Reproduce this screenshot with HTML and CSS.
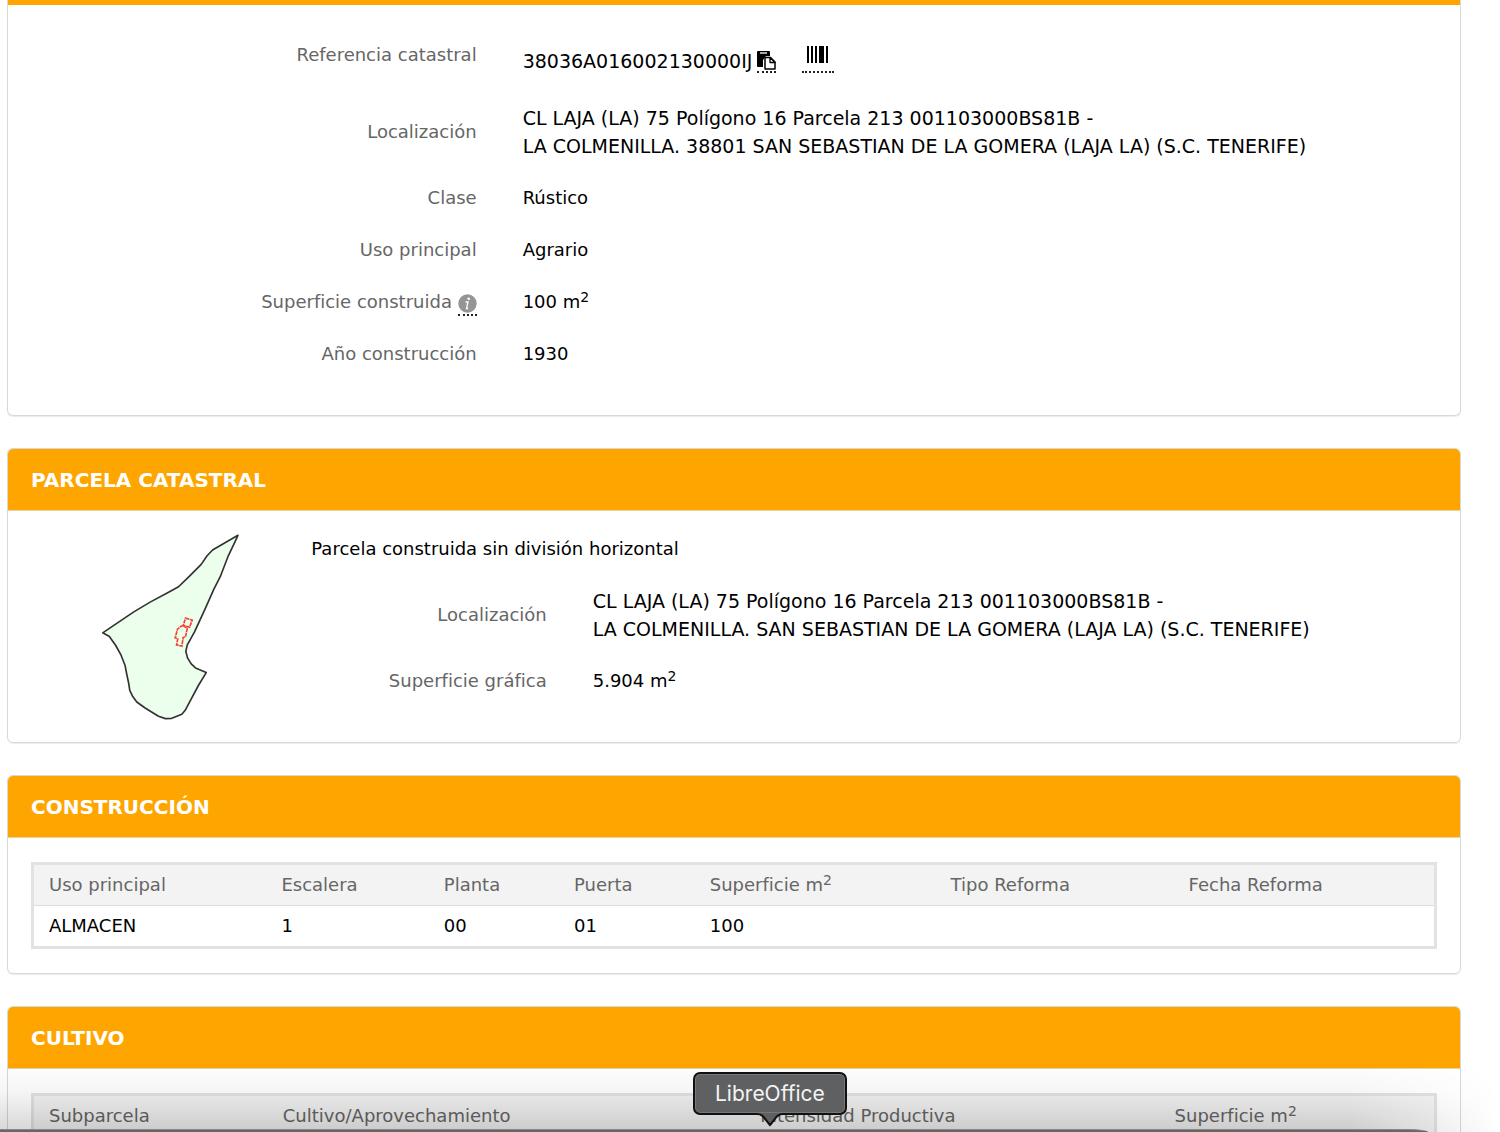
FILE: index.html
```html
<!DOCTYPE html>
<html lang="es">
<head>
  <meta charset="UTF-8">
  <meta name="viewport" content="width=device-width, initial-scale=1.0">
  <title>Consulta de datos catastrales</title>
  <link rel="stylesheet" href="styles.css">
</head>
<body>
  <main class="page">
    <section class="panel panel-first">
      <div class="panel-strip"></div>
      <dl class="data">
        <div class="row">
          <dt>Referencia catastral</dt>
          <dd class="reference">
            <span>38036A016002130000IJ</span>
            <button type="button" class="icon-btn copy" aria-label="Copiar referencia">
              <svg width="19" height="19" viewBox="0 0 19 19">
                <path d="M1 0h11q1 0 1 1v4H9L6 9v7H1q-1 0-1-1V1q0-1 1-1z" fill="#000"/>
                <path d="M3 1h7v2H3z" fill="#aaa"/>
                <path d="M8 6.500h5.500l4.500 4.500v7H8z" fill="#fff" stroke="#000" stroke-width="1.500" stroke-linejoin="round"/>
                <path d="M13 6.500v5h5z" fill="#fff" stroke="#000" stroke-width="1.300" stroke-linejoin="round"/>
              </svg>
            </button>
            <button type="button" class="icon-btn barcode" aria-label="Código de barras">
              <svg width="22" height="17" viewBox="0 0 22 17">
                <path d="M0 0h2v17H0zM4 0h2v17H4zM8 0h2v17H8zM12 0h5v17h-5zM19 0h2v17h-2z"/>
              </svg>
            </button>
          </dd>
        </div>
        <div class="row">
          <dt>Localización</dt>
          <dd class="address">CL LAJA (LA) 75 Polígono 16 Parcela 213 001103000BS81B -<br>LA COLMENILLA. 38801 SAN SEBASTIAN DE LA GOMERA (LAJA LA) (S.C. TENERIFE)</dd>
        </div>
        <div class="row">
          <dt>Clase</dt>
          <dd>Rústico</dd>
        </div>
        <div class="row">
          <dt>Uso principal</dt>
          <dd>Agrario</dd>
        </div>
        <div class="row">
          <dt>Superficie construida
            <button type="button" class="icon-btn info" aria-label="Información">
              <svg width="19" height="19" viewBox="0 0 19 19">
                <circle cx="9.500" cy="9.500" r="9.200" fill="#959595"/>
                <circle cx="10.700" cy="4.800" r="1.300" fill="#fff"/>
                <path d="M7.500 8h2.500l-1.500 6.500h1.700" fill="none" stroke="#fff" stroke-width="1.300"/>
              </svg>
            </button>
          </dt>
          <dd>100 m<sup>2</sup></dd>
        </div>
        <div class="row">
          <dt>Año construcción</dt>
          <dd>1930</dd>
        </div>
      </dl>
    </section>

    <section class="panel">
      <h2>PARCELA CATASTRAL</h2>
      <div class="parcel">
        <div class="map">
          <svg viewBox="-39 45 564 564" role="img" aria-label="Croquis de la parcela">
            <path d="M443 46L367 90L350 108L333 133L298 168L265 200L238 215L180 246L130 276L38 338L58 349L77 376L93 405L105 436L110 462L116 490L119 510L128 529L140 545L165 563L205 588L226 595L245 594L275 582L285 570L300 542L325 495L348 457L316 443L303 431L292 413L287 394L291 375L313 335L343 270L371 207L390 170L413 110L433 68Z" fill="#ecffec" stroke="#333" stroke-width="5" stroke-linejoin="round"/>
            <path d="M286 294L306 300L298 321L279 316ZM279 316L291 325L286 350L279 352L275 378L259 374L263 356L255 353L262 327L270 320Z" fill="none" stroke="#f44336" stroke-width="5" stroke-dasharray="12 2"/>
          </svg>
        </div>
        <div class="parcel-info">
          <p>Parcela construida sin división horizontal</p>
          <dl class="data">
            <div class="row">
              <dt>Localización</dt>
              <dd class="address">CL LAJA (LA) 75 Polígono 16 Parcela 213 001103000BS81B -<br>LA COLMENILLA. SAN SEBASTIAN DE LA GOMERA (LAJA LA) (S.C. TENERIFE)</dd>
            </div>
            <div class="row">
              <dt>Superficie gráfica</dt>
              <dd>5.904 m<sup>2</sup></dd>
            </div>
          </dl>
        </div>
      </div>
    </section>

    <section class="panel">
      <h2>CONSTRUCCIÓN</h2>
      <div class="panel-body">
        <table class="building">
          <thead>
            <tr>
              <th>Uso principal</th>
              <th>Escalera</th>
              <th>Planta</th>
              <th>Puerta</th>
              <th>Superficie m<sup>2</sup></th>
              <th>Tipo Reforma</th>
              <th>Fecha Reforma</th>
            </tr>
          </thead>
          <tbody>
            <tr>
              <td>ALMACEN</td>
              <td>1</td>
              <td>00</td>
              <td>01</td>
              <td>100</td>
              <td></td>
              <td></td>
            </tr>
          </tbody>
        </table>
      </div>
    </section>

    <section class="panel">
      <h2>CULTIVO</h2>
      <div class="panel-body">
        <table class="crops">
          <thead>
            <tr>
              <th>Subparcela</th>
              <th>Cultivo/Aprovechamiento</th>
              <th>Intensidad Productiva</th>
              <th>Superficie m<sup>2</sup></th>
            </tr>
          </thead>
        </table>
      </div>
    </section>
  </main>

  <div class="dock-shadow"></div>
  <div class="dock"></div>
  <div class="dock-tip" role="tooltip">
    LibreOffice
    <svg width="26" height="14" viewBox="0 0 26 14">
      <path d="M0 0H26V1C20 1 19 5 13 12C7 5 6 1 0 1Z" fill="#5f6062"/>
      <path d="M0 1C6 1 7 5 13 12C19 5 20 1 26 1" fill="none" stroke="#111" stroke-width="2"/>
    </svg>
  </div>
</body>
</html>
```
FILE: styles.css
```css
* {
  box-sizing: border-box;
}
body {
  margin: 0;
  height: 100vh;
  background: #fff;
  color: #000;
  font-family: Verdana, "DejaVu Sans", sans-serif;
  font-size: 18px;
  line-height: 28px;
  overflow: hidden;
}
.page {
  height: 100%;
  padding: 0 39px 0 7px;
  overflow: hidden;
}
.panel {
  margin-bottom: 32px;
  border: 1px solid #d8d8d8;
  border-radius: 6px;
  box-shadow: 0 1px 1px rgba(0, 0, 0, 0.08);
  overflow: hidden;
}
.panel-first {
  border-top: 0;
  border-top-left-radius: 0;
  border-top-right-radius: 0;
}
.panel-strip {
  height: 5px;
  background: #ffa500;
}
.panel h2 {
  margin: 0;
  padding: 17px 23px 16px;
  background: #ffa500;
  border-bottom: 1px solid #e6d3a8;
  color: #fff;
  font-size: 20px;
  font-weight: bold;
  line-height: 28px;
}
.panel-body {
  padding: 24px 23px;
}

/* label / value rows */
.data {
  display: flex;
  flex-direction: column;
  gap: 24px;
  margin: 0;
}
.panel-first .data {
  padding: 36px 23px 47px;
}
.row {
  display: flex;
  align-items: center;
}
.row dt {
  width: 33.3333%;
  padding: 0 23px;
  color: #666;
  text-align: right;
}
.row dd {
  flex: 1;
  margin: 0;
  padding: 0 0 0 23px;
}
.row .address,
.row .reference {
  font-size: 19px;
}
.row:has(.reference) {
  align-items: flex-start;
}
.row .reference {
  display: flex;
  align-items: flex-end;
  height: 39px;
  padding-bottom: 5px;
}
sup {
  font-size: 14px;
  line-height: 0;
  vertical-align: 6px;
}

/* icons */
.icon-btn {
  padding: 0;
  background: none;
  border: 0;
  border-bottom: 2px dotted #222;
  cursor: pointer;
}
.icon-btn svg {
  display: block;
}
.copy {
  margin: 0 26px 2px 5px;
  padding-bottom: 1px;
}
.barcode {
  margin-bottom: 2px;
  padding: 0 5px 8px;
}
.info {
  margin: -4px 0;
  padding-bottom: 1px;
  vertical-align: -5px;
}

/* parcel */
.parcel {
  display: flex;
  padding: 24px 23px 47px;
}
.map {
  width: 16.6667%;
  height: 160px;
  padding-left: 46px;
}
.map svg {
  display: block;
  width: 100%;
  overflow: visible;
}
.parcel-info {
  flex: 1;
  padding: 0 23px;
}
.parcel-info p {
  margin: 0 0 24px;
  padding-left: 23px;
}
.parcel-info .row dt {
  width: 25%;
}

/* tables */
table {
  width: 100%;
  border: 3px solid #e2e2e2;
  border-spacing: 0;
  table-layout: fixed;
}
th,
td {
  height: 40px;
  padding: 0 15px;
  text-align: left;
  white-space: nowrap;
}
th {
  height: 41px;
  background: #f3f3f3;
  border-bottom: 1px solid #ddd;
  color: #666;
  font-weight: normal;
}
.building th:nth-child(1) { width: 16.6%; }
.building th:nth-child(2) { width: 11.6%; }
.building th:nth-child(3) { width: 9.3%; }
.building th:nth-child(4) { width: 9.7%; }
.building th:nth-child(5) { width: 17.2%; }
.building th:nth-child(6) { width: 17%; }
.crops th:nth-child(1) { width: 16.7%; }
.crops th:nth-child(2) { width: 34.1%; }
.crops th:nth-child(3) { width: 29.6%; }

/* dock */
.dock-shadow {
  position: fixed;
  left: 0;
  right: 0;
  bottom: 0;
  height: 72px;
  background: linear-gradient(rgba(0, 0, 0, 0), rgba(0, 0, 0, 0.04) 45%, rgba(0, 0, 0, 0.16));
  -webkit-mask-image: linear-gradient(to right, #000 90%, transparent);
  mask-image: linear-gradient(to right, #000 90%, transparent);
}
.dock {
  position: fixed;
  left: 0;
  right: 72px;
  bottom: 0;
  height: 3px;
  background: #666;
  border-top: 1px solid #888;
  border-top-right-radius: 20px 3px;
}
.dock-tip {
  position: fixed;
  left: 693px;
  bottom: 17px;
  padding: 6px 20px 5px;
  background: #5f6062;
  border: 2px solid #111;
  border-radius: 7px;
  box-shadow: inset 0 0 0 1px #77787a;
  color: #f4f4f4;
  font-family: Inter, sans-serif;
  font-size: 21px;
}
.dock-tip svg {
  position: absolute;
  left: 50%;
  top: 100%;
  margin-left: -13px;
}
```
